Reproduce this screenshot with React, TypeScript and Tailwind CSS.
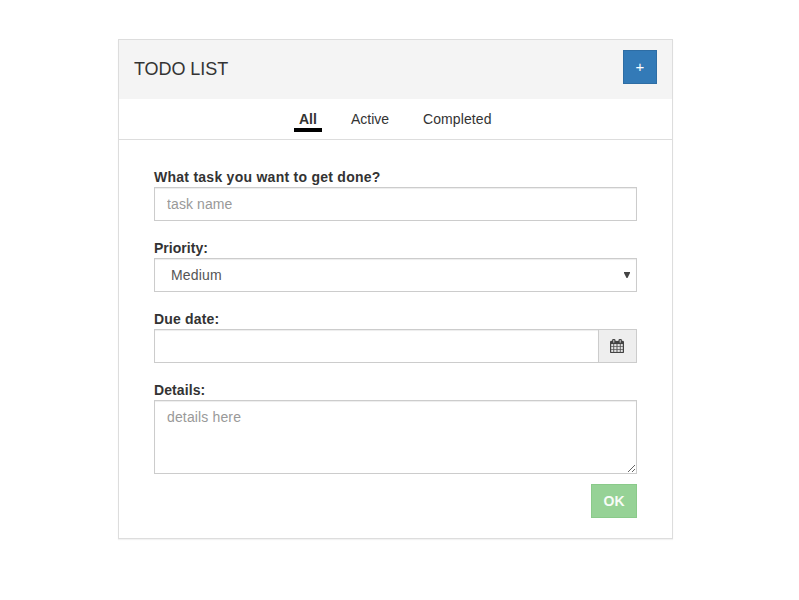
import React from "react";

const field =
  "block w-full h-[34px] border border-[#ccc] bg-white px-3 text-sm tracking-[0.1px] text-[#555] placeholder:text-[#999] shadow-[inset_0_1px_1px_rgba(0,0,0,0.075)] outline-none rounded-none";

function Field({
  label,
  tracking = "tracking-[0.1px]",
  children,
}: {
  label: string;
  tracking?: string;
  children: React.ReactNode;
}) {
  return (
    <div>
      <label className={`block text-sm leading-5 font-bold ${tracking}`}>{label}</label>
      {children}
    </div>
  );
}

function CalendarIcon() {
  return (
    <svg
      className="w-[14px] h-[14px]"
      viewBox="0 0 1664 1792"
      preserveAspectRatio="none"
      fill="currentColor"
      stroke="currentColor"
      strokeWidth="30"
    >
      <path
        transform="translate(-64 0)"
        d="M192 1664h288v-288h-288v288zm352 0h320v-288h-320v288zm-352-352h288v-320h-288v320zm352 0h320v-320h-320v320zm-352-384h288v-288h-288v288zm736 736h320v-288h-320v288zm-384-736h320v-288h-320v288zm768 736h288v-288h-288v288zm-384-352h320v-320h-320v320zm-352-864v-288q0-13-9.500-22.500t-22.500-9.500h-64q-13 0-22.500 9.500t-9.500 22.500v288q0 13 9.500 22.500t22.500 9.500h64q13 0 22.500-9.500t9.500-22.500zm736 864h288v-320h-288v320zm-384-384h320v-288h-320v288zm384 0h288v-288h-288v288zm32-480v-288q0-13-9.500-22.500t-22.500-9.500h-64q-13 0-22.500 9.500t-9.500 22.500v288q0 13 9.500 22.500t22.500 9.500h64q13 0 22.500-9.500t9.500-22.500zm384-64v1280q0 52-38 90t-90 38h-1408q-52 0-90-38t-38-90v-1280q0-52 38-90t90-38h128v-96q0-66 47-113t113-47h64q66 0 113 47t47 113v96h384v-96q0-66 47-113t113-47h64q66 0 113 47t47 113v96h128q52 0 90 38t38 90z"
      />
    </svg>
  );
}

export default function App() {
  return (
    <div className="h-[600px] bg-white pt-[39px] pl-[118px] text-[#333] font-['Liberation_Sans',Arial,sans-serif]">
      <div className="w-[555px] h-[500px] border border-[#ddd] bg-white shadow-[0_1px_1px_rgba(0,0,0,0.05)]">
        <header className="flex h-[59px] items-start justify-between bg-[#f4f4f4] px-[15px] pt-[10px]">
          <h1 className="pt-[9px] text-[18px] leading-5 tracking-[-0.07px]">TODO LIST</h1>
          <button className="h-[34px] w-[34px] border border-[#2e6da4] bg-[#337ab7] text-[15px] leading-5 text-white">+</button>
        </header>
        <nav className="flex h-[41px] items-start border-b border-[#ddd] pl-[175px] pt-[10px] text-sm leading-5">
          <a className="h-[23px] w-[28px] border-b-4 border-black px-[5px] font-bold">All</a>
          <a className="ml-[24px] w-[48px] px-[5px]">Active</a>
          <a className="ml-[24px] px-[5px] tracking-[0.1px]">Completed</a>
        </nav>
        <form className="flex flex-col gap-[17px] px-[35px] pt-[27px]">
          <Field label="What task you want to get done?" tracking="tracking-[0.26px]">
            <input className={field} placeholder="task name" />
          </Field>
          <Field label="Priority:" tracking="tracking-[0.03px]">
            <div className="flex h-[34px] items-center justify-between border border-[#ccc] pl-4 pr-[6px] text-sm tracking-[0.15px] text-[#555] shadow-[inset_0_1px_1px_rgba(0,0,0,0.075)]">
              <span>Medium</span>
              <svg className="h-[6px] w-[6px]" viewBox="0 0 6 6" fill="#444">
                <path d="M0 0h6v1L3.500 6h-1L0 1z" />
              </svg>
            </div>
          </Field>
          <Field label="Due date:" tracking="tracking-[0.18px]">
            <div className="flex">
              <input className={field} />
              <span className="flex h-[34px] w-[38px] shrink-0 items-center justify-center border border-l-0 border-[#ccc] bg-[#eee] pr-px text-[#444]">
                <CalendarIcon />
              </span>
            </div>
          </Field>
          <div>
            <Field label="Details:" tracking="tracking-[0.1px]">
              <textarea
                className="block h-[74px] w-full resize border border-[#ccc] bg-white px-3 py-[6px] text-sm leading-5 tracking-[0.14px] text-[#555] placeholder:text-[#999] shadow-[inset_0_1px_1px_rgba(0,0,0,0.075)] outline-none"
                placeholder="details here"
              />
            </Field>
            <div className="mt-[10px] flex justify-end">
              <button className="h-[34px] w-[46px] border border-[#8aca8a] bg-[#96d296] text-sm leading-5 font-bold text-[#f7fcf7]">OK</button>
            </div>
          </div>
        </form>
      </div>
    </div>
  );
}
